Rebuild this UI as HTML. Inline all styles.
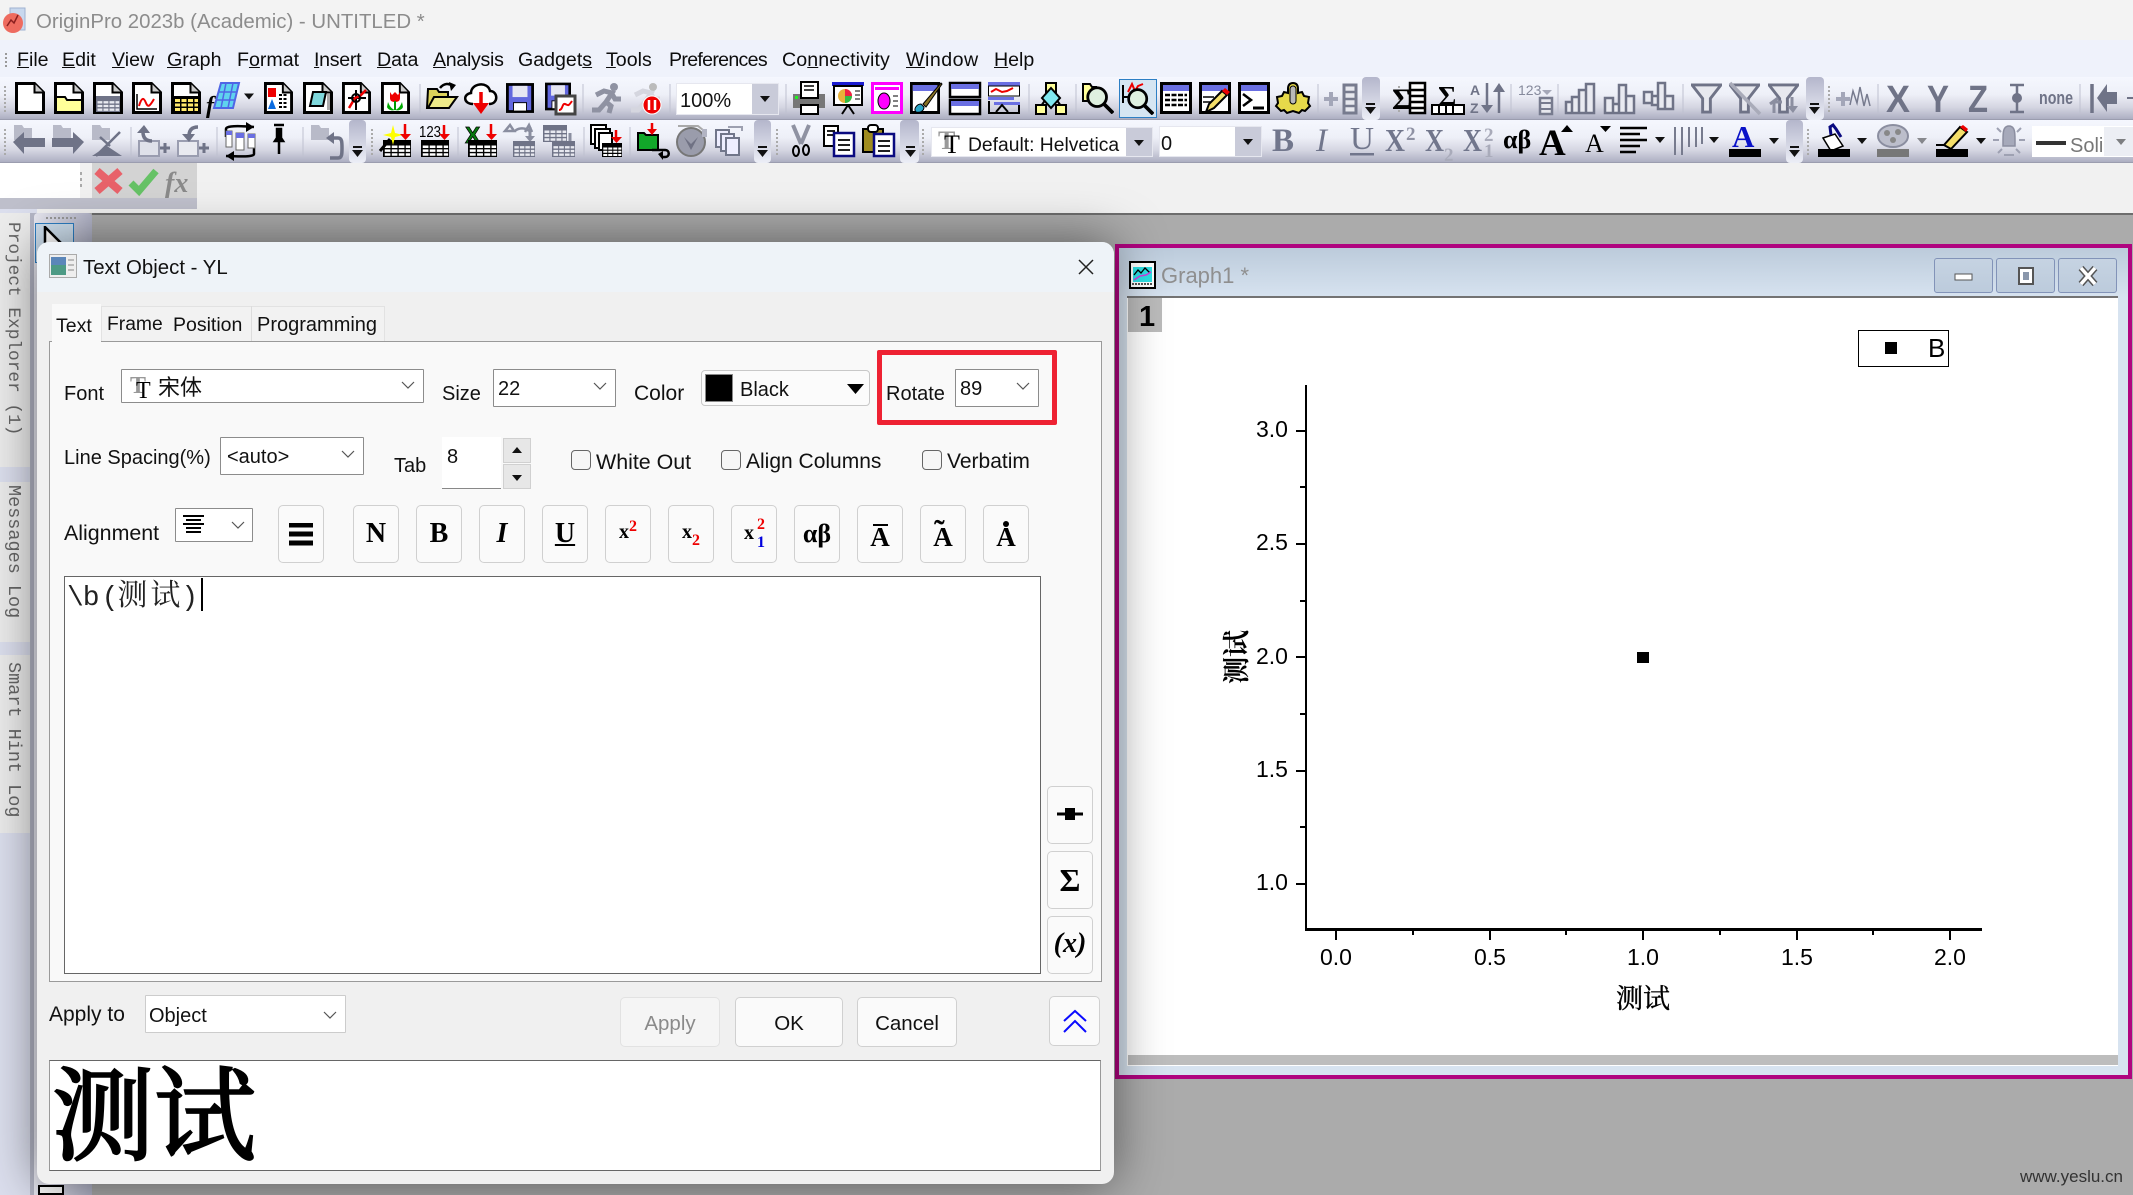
<!DOCTYPE html>
<html lang="zh"><head><meta charset="utf-8"><title>OriginPro</title>
<style>
html,body{margin:0;padding:0}
body{width:2133px;height:1195px;overflow:hidden;position:relative;background:#ababab;font-family:"Liberation Sans","Noto Sans CJK SC",sans-serif}
.a{position:absolute;box-sizing:border-box}
.l{position:absolute;white-space:nowrap;font-size:20px;line-height:24px;color:#111}
.m{top:48px;color:#0c0c0c;font-size:19.6px}
.tb{position:absolute;left:0;width:2133px;height:43px;background:linear-gradient(#f5f7fe 0,#eef0f8 40%,#d5d6e2 70%,#aeb0c3 97%,#8f91a3 100%)}
.c{position:absolute;box-sizing:border-box;background:#fff;border:1px solid #8c8c8c;border-radius:1px}
.b{position:absolute;box-sizing:border-box;background:#fafafa;border:1px solid #d0d0d0;border-radius:5px;text-align:center}
.f{font-family:"Liberation Serif",serif;font-weight:700;color:#000}
.ck{position:absolute;box-sizing:border-box;width:20px;height:20px;background:#f6f6f6;border:1px solid #666;border-radius:4px}
.v{position:absolute;white-space:nowrap;font:18.5px/20px "Liberation Mono",monospace;color:#666;transform-origin:0 0;transform:rotate(90deg)}
.gb{position:absolute;box-sizing:border-box;top:258px;width:59px;height:35px;border:1px solid #8293b8;border-radius:3px;background:linear-gradient(#c6d3e2,#bccbdc)}
.tk{position:absolute;background:#000}
.n{position:absolute;font-size:23px;line-height:26px;color:#000;white-space:nowrap}
</style></head><body>

<!-- workspace -->
<div class="a" style="left:0;top:163px;width:2133px;height:50px;background:#f1f1f1"></div>
<div class="a" style="left:92px;top:213px;width:2041px;height:982px;background:#ababab;border-top:2px solid #6d6d6d"></div>

<!-- left dock -->
<div class="a" style="left:0;top:209px;width:37px;height:986px;background:#dcdfee"></div>
<div class="a" style="left:0;top:213px;width:31px;height:254px;background:#ececec"></div>
<div class="a" style="left:0;top:482px;width:31px;height:160px;background:#ececec"></div>
<div class="a" style="left:0;top:655px;width:31px;height:178px;background:#ececec"></div>
<div class="a" style="left:30px;top:213px;width:7px;height:982px;background:#b4b6c6"></div>
<div class="v" style="left:23px;top:222px;font-size:17.8px">Project Explorer (1)</div>
<div class="v" style="left:23px;top:485px">Messages Log</div>
<div class="v" style="left:23px;top:662px">Smart Hint Log</div>
<!-- object toolbar -->
<div class="a" style="left:34px;top:213px;width:58px;height:982px;background:linear-gradient(90deg,#e9e9f2,#b2b4c8);border-radius:4px 4px 0 0"></div>
<div class="a" style="left:46px;top:217px;width:30px;height:0;border-top:2px dotted #999"></div>
<div class="a" style="left:35px;top:223px;width:39px;height:40px;background:#cfe0ef;border:1px solid #2d7fc4"></div>
<svg class="a" style="left:42px;top:226px" width="24" height="24"><path d="M3 1V20L20 18z" fill="#fff" stroke="#000" stroke-width="2.5"/></svg>
<div class="a" style="left:38px;top:1185px;width:26px;height:10px;background:#fff;border:2px solid #000"></div>

<!-- title bar -->
<div class="a" style="left:0;top:0;width:2133px;height:40px;background:#f3f3f3"></div>
<svg class="a" style="left:2px;top:6px" width="26" height="28"><rect x="8" y="2" width="15" height="22" fill="#c8d8ee" stroke="#9fb2d0"/><circle cx="11" cy="17" r="10" fill="#ee6b5f"/><path d="M5 20l4-6 3 3 4-8" stroke="#8a1f1f" fill="none" stroke-width="1.5"/></svg>
<div class="l" style="left:36px;top:10px;color:#8c8c8c;font-size:20.4px">OriginPro 2023b (Academic) - UNTITLED *</div>

<!-- menu bar -->
<div class="a" style="left:0;top:40px;width:2133px;height:37px;background:#eff2fb"></div>
<div class="a" style="left:5px;top:53px;width:0;height:14px;border-left:2px dotted #999"></div>
<div class="l m" style="left:17px"><u>F</u>ile</div>
<div class="l m" style="left:62px"><u>E</u>dit</div>
<div class="l m" style="left:112px"><u>V</u>iew</div>
<div class="l m" style="left:167px"><u>G</u>raph</div>
<div class="l m" style="left:237px">F<u>o</u>rmat</div>
<div class="l m" style="left:314px;letter-spacing:-.3px"><u>I</u>nsert</div>
<div class="l m" style="left:377px"><u>D</u>ata</div>
<div class="l m" style="left:433px;letter-spacing:-.3px"><u>A</u>nalysis</div>
<div class="l m" style="left:518px">Gadget<u>s</u></div>
<div class="l m" style="left:606px"><u>T</u>ools</div>
<div class="l m" style="left:669px;letter-spacing:-.7px">Preferences</div>
<div class="l m" style="left:782px;letter-spacing:.1px">Co<u>n</u>nectivity</div>
<div class="l m" style="left:906px;letter-spacing:.5px"><u>W</u>indow</div>
<div class="l m" style="left:994px"><u>H</u>elp</div>

<!-- toolbars -->
<div class="tb" style="top:77px"></div>
<div class="tb" style="top:120px"></div>

<!-- toolbar icons -->
<svg class="a" style="left:0;top:0" width="2133" height="213" font-family="Liberation Sans">
<defs>
<linearGradient id="gr" x1="0" y1="0" x2="0" y2="1"><stop offset="0" stop-color="#b4b6cb"/><stop offset="1" stop-color="#eceef6"/></linearGradient>
<symbol id="d" viewBox="0 0 30 32" preserveAspectRatio="none"><path d="M1.5 1.5h18l9 9v20h-27z" fill="#fff" stroke="#000" stroke-width="3"/><path d="M19.5 1.5v9h9" fill="#ccc" stroke="#000" stroke-width="2"/></symbol>
<symbol id="g" viewBox="0 0 32 24" preserveAspectRatio="none"><rect width="32" height="24" fill="#000"/><path d="M2 9.5H31M2 15H31M2 20.5H31" stroke="#fff" stroke-width="3.5" stroke-dasharray="6.5 1.5"/></symbol>
<symbol id="gg" viewBox="0 0 32 24" preserveAspectRatio="none"><rect width="32" height="24" fill="#6f7387"/><path d="M2 9.5H31M2 15H31M2 20.5H31" stroke="#e8e9f0" stroke-width="3.5" stroke-dasharray="6.5 1.5"/></symbol>
<symbol id="w" viewBox="0 0 32 32" preserveAspectRatio="none"><rect x="1.5" y="1.5" width="29" height="29" fill="#fff" stroke="#000" stroke-width="3"/><rect x="3" y="3" width="26" height="6" fill="#6a6fe2"/></symbol>
<symbol id="da" viewBox="0 0 12 8"><path d="M1 1h10L6 7z" fill="#111"/></symbol>
<symbol id="mag" viewBox="0 0 32 32"><path d="M21 21l10 10" stroke="#000" stroke-width="4"/><circle cx="14" cy="14" r="10" fill="#dff0e0" stroke="#000" stroke-width="3"/></symbol>
<symbol id="fun" viewBox="0 0 32 32"><path d="M1 2h30L20 16v14h-8V16z" fill="#e7e8ee" stroke="#6f7387" stroke-width="3"/></symbol>
<symbol id="sv" viewBox="0 0 30 32"><rect x="1.5" y="1.5" width="27" height="29" fill="#6267de" stroke="#000" stroke-width="3"/><rect x="7" y="3" width="16" height="12" fill="#e6e6f2"/><rect x="8" y="21" width="14" height="9" fill="#fff" stroke="#000"/></symbol>
<symbol id="run" viewBox="0 0 32 32"><circle cx="24" cy="5" r="4"/><path d="M6 13l8-4 8 2-6 9 5 4-2 7M16 20L9 28H2M22 12l3 5h6" fill="none" stroke-width="5" stroke="currentColor"/></symbol>
</defs>

<!-- grips -->
<g stroke="#aaa" stroke-width="2" stroke-dasharray="2 2" fill="none">
<path d="M5 86v28M5 129v28M1829 86v28M1808 129v28M372 129v28M777 129v28M923 129v28M1399 86v28"/>
</g>
<!-- gripper ends -->
<g fill="url(#gr)">
<rect x="349" y="120" width="17" height="43" rx="4"/><rect x="754" y="120" width="17" height="43" rx="4"/><rect x="900" y="120" width="19" height="43" rx="4"/><rect x="1786" y="120" width="17" height="43" rx="4"/>
<rect x="1362" y="77" width="18" height="43" rx="4"/><rect x="1806" y="77" width="18" height="43" rx="4"/>
</g>
<g fill="#111">
<g id="ge"><rect x="353" y="146" width="9" height="2"/><path d="M352 150h11l-5.500 7z"/></g>
<use href="#ge" x="405"/><use href="#ge" x="553"/><use href="#ge" x="1437"/>
<use href="#ge" x="1013" y="-43"/><use href="#ge" x="1457" y="-43"/>
</g>
<!-- separators -->
<g stroke="#bfc1d0" stroke-width="1"><path d="M420 84v30M583 84v30M670 84v30M786 84v30M1029 84v30M1076 84v30M1318 84v30M1511 84v30M1558 84v30M1683 84v30M1878 84v30M2080 84v30M131 127v30M217 127v30M303 127v30M458 127v30M584 127v30M630 127v30"/></g>

<!-- ROW 1 -->
<use href="#d" x="15" y="82" width="30" height="32"/>
<use href="#d" x="54" y="82" width="30" height="32"/><path d="M56 112V97h9l2 3h15v12z" fill="#ffff99" stroke="#000" stroke-width="2"/>
<use href="#d" x="93" y="82" width="30" height="32"/><use href="#gg" x="96" y="96" width="24" height="16"/>
<use href="#d" x="132" y="82" width="30" height="32"/><path d="M137 94v15h20" fill="none" stroke="#000" stroke-width="1.500"/><path d="M139 106c3-10 5-8 7-3s4 3 8-4" stroke="#e00" stroke-width="2" fill="none"/>
<use href="#d" x="171" y="82" width="30" height="32"/><rect x="174" y="96" width="24" height="16" fill="#000"/><path d="M175 100.500H198M175 105H198M175 109.500H198" stroke="#ffe86a" stroke-width="3" stroke-dasharray="5 1.500"/>
<path d="M214 108l7-25h18l-6 25z" fill="#5fd3ee" stroke="#4f66e6" stroke-width="2"/><path d="M218 92h18M216 100h18M226 83l-5 25M233 83l-5 25" stroke="#4f66e6" stroke-width="1.500"/><text x="206" y="113" font-family="Liberation Serif" font-style="italic" font-weight="700" font-size="24">f</text>
<use href="#da" x="243" y="92" width="12" height="9"/>
<use href="#d" x="264" y="82" width="29" height="32"/><rect x="268" y="88" width="8" height="9" fill="#e00"/><path d="M272 99l-4 10h8z" fill="#0a6be0"/><path d="M279 95h9M279 99h9M279 103h9M279 107h9" stroke="#000" stroke-width="2" stroke-dasharray="3 1.500"/>
<use href="#d" x="303" y="82" width="30" height="32"/><path d="M310 106l3-14h13l-3 14z" fill="#7fd8dc" stroke="#000" stroke-width="2"/><rect x="327" y="94" width="3" height="16" fill="#aaa"/>
<use href="#d" x="342" y="82" width="29" height="32"/><path d="M348 98h18M356 90v20" stroke="#000" stroke-width="2"/><path d="M349 108l6-10 5-2 6-6" stroke="#e00" stroke-width="2.500" fill="none"/><circle cx="356" cy="98" r="4" fill="none" stroke="#000" stroke-width="2"/>
<use href="#d" x="381" y="82" width="29" height="32"/><path d="M390 92l2 3 3-3 3 3 2-3v6c0 3-2 4-5 4s-5-1-5-4z" fill="#e00"/><path d="M395 101v9" stroke="#090" stroke-width="2"/><path d="M388 102c2 5 4 7 7 8-3 1-7 0-8-3zM402 102c-2 5-4 7-7 8 3 1 7 0 8-3z" fill="#0a0"/>
<path d="M428 89h9l2 3h9v16h-21z" fill="#dcd25a" stroke="#000" stroke-width="2"/><path d="M428 108l6-11h23l-8 11z" fill="#eeea8a" stroke="#000" stroke-width="2"/><path d="M440 88c4-5 9-5 13-2" fill="none" stroke="#000" stroke-width="2.500"/><path d="M449 82l7 3-5 6z"/>
<path d="M473 104c-10 0-10-10-2-11 0-10 17-12 19-2 8 0 9 13-1 13" fill="#fff" stroke="#000" stroke-width="2.500"/><path d="M481 92v14" stroke="#e00" stroke-width="3.500"/><path d="M473 103h16l-8 11z" fill="#e00"/>
<use href="#sv" x="506" y="82" width="28" height="32"/>
<use href="#sv" x="545" y="82" width="26" height="29"/><rect x="556" y="96" width="19" height="18" fill="#fff" stroke="#444" stroke-width="3"/><path d="M559 110c4 0 3-7 6-6s3 3 7-3" stroke="#e00" stroke-width="2" fill="none"/>
<use href="#run" x="590" y="82" width="32" height="32" style="color:#8f92a2;fill:#8f92a2"/>
<use href="#run" x="629" y="82" width="32" height="32" style="color:#d5d6df;fill:#bbb"/><circle cx="652" cy="105" r="9" fill="#e00" stroke="#fff"/><path d="M649 100v10M655 100v10" stroke="#fff" stroke-width="2.500"/>
<!-- zoom combo -->
<rect x="676" y="83" width="103" height="32" fill="#fff"/><rect x="752" y="84" width="26" height="30" fill="#c9cbd9"/><rect x="676.500" y="83.500" width="102" height="31" fill="none" stroke="#e6e7ef"/>
<text x="680" y="107" font-size="20" fill="#111">100%</text><use href="#da" x="759" y="95" width="12" height="8"/>
<!-- printer etc -->
<rect x="793" y="94" width="32" height="14" fill="#777"/><rect x="801" y="82" width="17" height="16" fill="#fff" stroke="#000" stroke-width="2"/><path d="M804 86h10M804 90h10" stroke="#000" stroke-width="1.500"/><rect x="801" y="105" width="17" height="9" fill="#fff" stroke="#000" stroke-width="2"/><rect x="795" y="96" width="3" height="3" fill="#2e2"/>
<rect x="832" y="82" width="32" height="4" fill="#1b1bd0"/><rect x="834" y="86" width="28" height="19" fill="#fff" stroke="#000" stroke-width="2"/><circle cx="845" cy="96" r="7" fill="#e8b23a"/><path d="M845 96v-7a7 7 0 0 1 7 7z" fill="#e24"/><path d="M845 96h7a7 7 0 0 1-7 7z" fill="#3b4"/><path d="M855 91h5M855 95h5M855 99h5" stroke="#000"/><path d="M848 105l-6 9M848 105l6 9" stroke="#000" stroke-width="2"/>
<rect x="872.500" y="83.500" width="29" height="29" fill="#fff" stroke="#f0f" stroke-width="3"/><rect x="875" y="87" width="24" height="3" fill="#f0f"/><ellipse cx="884" cy="101" rx="6" ry="8" fill="#f0f" stroke="#000"/><path d="M893 96h5M893 101h5M893 106h5" stroke="#000"/>
<use href="#w" x="910" y="82" width="30" height="32"/><path d="M916 112c-3-3 1-8 5-8l3 3c0 4-4 6-8 5z" fill="#2aa7c9" stroke="#000"/><path d="M923 104l18-21 1 1-16 23z" fill="#8a7426" stroke="#000"/>
<rect x="950" y="83" width="30" height="14" fill="#fff" stroke="#000" stroke-width="2.500"/><rect x="951" y="84" width="28" height="5" fill="#6a6fe2"/><rect x="950" y="100" width="30" height="14" fill="#fff" stroke="#000" stroke-width="2.500"/><rect x="951" y="101" width="28" height="5" fill="#6a6fe2"/>
<rect x="988" y="82" width="32" height="4" fill="#6a6fe2"/><rect x="988.500" y="86" width="31" height="10" fill="#fff" stroke="#000"/><path d="M991 92l5-3 6 3 5-1 6-3" stroke="#e00" stroke-width="2" fill="none"/><rect x="988" y="97" width="26" height="3" fill="#6a6fe2"/><rect x="994" y="102" width="26" height="3" fill="#6a6fe2"/><path d="M989 101v12h30v-8M996 112l6-7 6 7" fill="none" stroke="#000" stroke-width="2"/>
<path d="M1051 92l-10 14M1051 92l10 14" stroke="#000" stroke-width="2"/><rect x="1046" y="83" width="10" height="9" fill="#ffff99" stroke="#000" stroke-width="2"/><path d="M1051 88l9 10-9 10-9-10z" fill="#80e8f0" stroke="#000" stroke-width="2"/><rect x="1036" y="105" width="10" height="9" fill="#ffff99" stroke="#000" stroke-width="2"/><rect x="1056" y="105" width="10" height="9" fill="#ffff99" stroke="#000" stroke-width="2"/>
<path d="M1083 84h7l2 3h4v14h-13z" fill="#ffff99" stroke="#000" stroke-width="2"/><use href="#mag" x="1084" y="84" width="30" height="30"/>
<rect x="1119.500" y="79.500" width="37" height="38" fill="#d5e5f2" stroke="#2d7fc4"/><path d="M1123 85v18M1123 97h6" stroke="#000" stroke-width="2"/><path d="M1128 92l4-8 3 7 3-5 5-2" stroke="#e00" stroke-width="2" fill="none"/><use href="#mag" x="1125" y="86" width="29" height="29"/>
<use href="#w" x="1160" y="82" width="32" height="32"/><path d="M1165 95h22M1165 100h22M1165 105h22" stroke="#000" stroke-width="2.500" stroke-dasharray="5 1.500"/>
<use href="#w" x="1199" y="82" width="32" height="32"/><path d="M1203 97h11M1203 102h8" stroke="#000" stroke-width="1.500"/><path d="M1206 112l3-8 13-13 5 4-13 13z" fill="#f5df6a" stroke="#000" stroke-width="2"/><path d="M1222 91l3-3 5 4-3 3z" fill="#e00"/>
<use href="#w" x="1238" y="82" width="32" height="32"/><path d="M1243 94l8 6-8 6" fill="none" stroke="#000" stroke-width="2.500"/><path d="M1253 108h11" stroke="#000" stroke-width="3"/>
<path d="M1293 83c4 0 5 3 5 6v4l4-1 2 4 5 1-1 6 2 3-5 5-3-1-3 3-6-2-6 2-3-3-3 1-5-5 2-3-1-6 5-1 2-4 4 1v-4c0-3 1-6 5-6z" fill="#e6d94a" stroke="#000" stroke-width="2"/><rect x="1290" y="86" width="6" height="18" rx="3" fill="#b9b9b9" stroke="#000"/>
<path d="M1324 99h14M1331 92v14" stroke="#a3a6b8" stroke-width="4"/><path d="M1344 85h12v28h-12z" fill="#e7e8ee" stroke="#777b8e" stroke-width="3"/><path d="M1344 92h12M1344 99h12M1344 106h12" stroke="#777b8e" stroke-width="2.500"/>
<!-- sigma col -->
<text x="1392" y="109" font-size="30" font-weight="700" font-family="Liberation Serif">Σ</text><rect x="1410" y="83" width="15" height="30" fill="#fff" stroke="#000" stroke-width="2.500"/><path d="M1410 90h15M1410 96h15M1410 102h15M1410 108h15" stroke="#000" stroke-width="2.500"/>
<text x="1438" y="106" font-size="28" font-weight="700" font-family="Liberation Serif">Σ</text><rect x="1432" y="105" width="32" height="9" fill="#fff" stroke="#000" stroke-width="2"/><path d="M1439 105v9M1446 105v9M1453 105v9" stroke="#000" stroke-width="2"/>
<text x="1470" y="95" font-size="14" fill="#6f7387" font-weight="700">A</text><text x="1470" y="113" font-size="14" fill="#6f7387" font-weight="700">Z</text><path d="M1487 83v27M1499 86v27" stroke="#6f7387" stroke-width="2.500"/><path d="M1481 105h12l-6 8zM1493 92h12l-6-9z" fill="#6f7387"/>
<text x="1518" y="95" font-size="14" fill="#868a9c">123</text><path d="M1542 90l5 5 5-5z" fill="#a5a8b8"/><path d="M1540 98h12v16h-12z" fill="#e7e8ee" stroke="#777b8e" stroke-width="2.500"/><path d="M1540 103h12M1540 109h12" stroke="#777b8e" stroke-width="2"/>
<g fill="#e9eaf1" stroke="#6f7387" stroke-width="2.500"><path d="M1566 102h6v11h-6zM1572 97h7v16h-7zM1579 90h7v23h-7zM1586 84h8v29h-8z"/><path d="M1605 98h8v15h-8zM1613 104h6v9h-6zM1619 85h7v28h-7zM1626 96h8v17h-8z"/><path d="M1644 92h8v11h-8zM1652 96h6v9h-6zM1658 83h7v26h-7zM1665 96h8v13h-8z"/></g>
<use href="#fun" x="1691" y="83" width="31" height="31"/><use href="#fun" x="1729" y="83" width="31" height="31"/><path d="M1730 83l30 31" stroke="#a9abb9" stroke-width="3.500"/><use href="#fun" x="1768" y="83" width="31" height="31"/><path d="M1774 113v-11h8M1778 98l-8 6M1792 97v9" stroke="#8b8ea0" stroke-width="3" fill="none"/><path d="M1787 106h11l-5 7z" fill="#8b8ea0"/>
<path d="M1836 99h14M1843 92v14" stroke="#a3a6b8" stroke-width="4"/><path d="M1850 105l3-14 4 12 3-16 4 19 3-12 3 12" stroke="#777b8e" stroke-width="1.500" fill="none"/>
<g fill="#6f7387" font-weight="700" font-size="38" style="font-stretch:condensed"><text x="1886" y="112" textLength="24" lengthAdjust="spacingAndGlyphs">X</text><text x="1927" y="112" textLength="22" lengthAdjust="spacingAndGlyphs">Y</text><text x="1968" y="112" textLength="20" lengthAdjust="spacingAndGlyphs">Z</text><text x="2039" y="104" font-size="18" textLength="34" lengthAdjust="spacingAndGlyphs">none</text></g>
<path d="M2010 85h14M2010 112h14M2017 85v27" stroke="#6f7387" stroke-width="2.500"/><circle cx="2017" cy="98" r="5" fill="#6f7387"/>
<path d="M2092 84v29" stroke="#6f7387" stroke-width="3.500"/><path d="M2097 98l10-14v8h10v12h-10v8z" fill="#6f7387"/>
<path d="M2127 98h6" stroke="#6f7387" stroke-width="2"/>

<!-- ROW 2 -->
<g id="fld"><path d="M14 128v-3h8l2 3h8v12H14z" fill="#b8bac8"/></g>
<path d="M13 142l11-10v6h21v9H24v7z" fill="#6f7387"/>
<path d="M53 125h8l2 3h8v12H53z" fill="#b8bac8"/><path d="M84 142l-11-10v6H52v9h21v7z" fill="#6f7387"/>
<path d="M92 125h8l2 3h8v12H92z" fill="#b8bac8"/><path d="M92 156l15-10 15 10z" fill="#6f7387"/><path d="M96 156l24-24M100 137l10 9" stroke="#6f7387" stroke-width="2.500"/>
<path d="M139 141h20v15h-20z" fill="#dfe1ea" stroke="#9a9db0" stroke-width="2"/><path d="M152 141c-6 0-9-3-9-9" fill="none" stroke="#6f7387" stroke-width="3.500"/><path d="M137 133l7-8 6 8z" fill="#6f7387"/><path d="M160 148h10M165 143v10" stroke="#6f7387" stroke-width="3"/>
<path d="M178 141h20v15h-20z" fill="#e9eaf0" stroke="#9a9db0" stroke-width="2"/><path d="M198 127c-6 0-9 3-9 9" fill="none" stroke="#6f7387" stroke-width="3.500"/><path d="M182 134l7 8 6-8z" fill="#6f7387"/><path d="M199 148h10M204 143v10" stroke="#6f7387" stroke-width="3"/>
<path d="M226 137v-8c0-2 4-4 28-2M254 146v8c0 2-4 3-28 2" fill="none" stroke="#000" stroke-width="2.500"/><path d="M246 122l8 5-8 5zM234 151l-8 5 8 5z" fill="#000"/><rect x="226" y="131" width="6" height="16" fill="#fff" stroke="#666"/><rect x="226" y="131" width="6" height="4" fill="#6a6fe2"/><rect x="236" y="133" width="8" height="17" fill="#fff" stroke="#666"/><rect x="236" y="133" width="8" height="5" fill="#6a6fe2"/><rect x="248" y="134" width="7" height="14" fill="#fff" stroke="#666"/><rect x="248" y="134" width="7" height="4" fill="#6a6fe2"/>
<path d="M274 125h10M275 141h8l-2-3v-9h-4v9zM279 141v13" stroke="#000" stroke-width="2.500" fill="#000"/>
<path d="M311 125h8l2 3h8v12h-18z" fill="#b8bac8"/><path d="M330 158h8c4 0 4-4 4-10s0-10-4-10h-6" stroke="#6f7387" stroke-width="3.500" fill="none"/><path d="M334 132l-8 6 8 6z" fill="#6f7387"/>
<!-- data import group -->
<use href="#g" x="383" y="140" width="28" height="17"/><path d="M393 125l2 8 8 2-8 2-2 8-2-8-8-2 8-2z" fill="#ff0"/><path d="M380 151l10-12" stroke="#000" stroke-width="3"/><path d="M405 124v11" stroke="#e00" stroke-width="2.500"/><path d="M400 134h11l-5.500 6z" fill="#e00"/>
<text x="419" y="137" font-size="16" textLength="22" lengthAdjust="spacingAndGlyphs">123</text><path d="M444 125v10" stroke="#e00" stroke-width="2.500"/><path d="M439 134h11l-5.500 6z" fill="#e00"/><use href="#g" x="421" y="140" width="28" height="17"/>
<text x="465" y="143" font-size="23" font-weight="700" fill="#087a10" stroke="#000" stroke-width=".7">X</text><path d="M491 124v11" stroke="#e00" stroke-width="2.500"/><path d="M486 134h11l-5.500 6z" fill="#e00"/><use href="#g" x="468" y="140" width="29" height="17"/>
<path d="M515 131a9 7 0 0 1 14 0M505 131l5-6 4 6zM525 132l4-7 3 7" fill="none" stroke="#8a8ea0" stroke-width="2.500"/><path d="M530 127v10" stroke="#8a8ea0" stroke-width="3"/><path d="M525 136h10l-5 6z" fill="#8a8ea0"/><use href="#gg" x="513" y="141" width="22" height="16"/>
<use href="#gg" x="543" y="125" width="24" height="17"/><path d="M570 133v10" stroke="#8a8ea0" stroke-width="3"/><path d="M565 141h10l-5 6z" fill="#8a8ea0"/><use href="#gg" x="552" y="141" width="23" height="16"/>
<rect x="591" y="125" width="15" height="19" fill="#fff" stroke="#000" stroke-width="2"/><rect x="595" y="129" width="15" height="19" fill="#fff" stroke="#000" stroke-width="2"/><rect x="599" y="133" width="13" height="17" fill="#fff" stroke="#000" stroke-width="2"/><path d="M616 130v9" stroke="#e00" stroke-width="2.500"/><path d="M611 137h11l-5.500 6z" fill="#e00"/><use href="#g" x="602" y="143" width="20" height="14"/>
<path d="M638 133h6l2 2h12v15h-20z" fill="#12a72a" stroke="#000" stroke-width="2"/><path d="M652 123v7" stroke="#e00" stroke-width="2.500"/><path d="M647 129h10l-5 6z" fill="#e00"/><path d="M652 150h13c5 0 5 7 0 7h-2" fill="none" stroke="#000" stroke-width="2.500"/><path d="M658 154l5-3v9z" fill="#000"/>
<circle cx="691" cy="142" r="14" fill="#9a9cab" stroke="#777" stroke-width="2"/><path d="M684 137l7 7 7-7-7 13z" fill="#6f7183"/><path d="M678 126h20l5 4" fill="none" stroke="#aaa" stroke-width="2"/><path d="M702 129h5v8h-5z" fill="#b2b4c3"/>
<g fill="#eef" stroke="#71768a" stroke-width="2"><rect x="716" y="130" width="13" height="17"/><rect x="721" y="134" width="13" height="17"/><rect x="726" y="138" width="13" height="17"/></g><path d="M728 127h14v4" stroke="#9da0b0" fill="none" stroke-width="2"/>
<path d="M793 125l8 19M809 125l-8 19" stroke="#8f92a2" stroke-width="4"/><ellipse cx="796" cy="151" rx="3" ry="5" fill="none" stroke="#000" stroke-width="2"/><ellipse cx="806" cy="150" rx="3" ry="5" fill="none" stroke="#000" stroke-width="2"/>
<g fill="#fff" stroke="#000" stroke-width="2"><path d="M824 126h14v5"/><path d="M824 126h14v20h-14z"/></g><rect x="834" y="133" width="20" height="23" fill="#fff" stroke="#0a0a80" stroke-width="2.500"/><path d="M838 140h12M838 145h12M838 150h12M827 131h8M827 135h6" stroke="#000" stroke-width="1.800"/>
<rect x="863" y="129" width="20" height="23" fill="#a08c20" stroke="#000" stroke-width="2"/><rect x="868" y="125" width="10" height="7" rx="3" fill="#fff" stroke="#000" stroke-width="2"/><rect x="874" y="134" width="20" height="22" fill="#fff" stroke="#0a0a80" stroke-width="2.500"/><path d="M878 141h12M878 146h12M878 151h12" stroke="#000" stroke-width="1.800"/>
<!-- font combo -->
<rect x="931" y="127" width="222" height="30" fill="#fff"/><rect x="1126" y="128" width="26" height="28" fill="#c9cbd9"/><rect x="931.500" y="127.500" width="221" height="29" fill="none" stroke="#e6e7ef"/>
<text x="938" y="149" font-size="26" font-family="Liberation Serif" font-weight="700" fill="#999">T</text><text x="944" y="153" font-size="26" font-family="Liberation Serif">T</text>
<text x="968" y="151" font-size="19.300" fill="#111">Default: Helvetica</text><use href="#da" x="1133" y="139" width="12" height="8"/>
<rect x="1159" y="126" width="103" height="31" fill="#fff"/><rect x="1235" y="127" width="26" height="29" fill="#c9cbd9"/><rect x="1159.500" y="126.500" width="102" height="30" fill="none" stroke="#e6e7ef"/>
<text x="1161" y="150" font-size="20" fill="#111">0</text><use href="#da" x="1242" y="138" width="12" height="8"/>
<g font-family="Liberation Serif" font-weight="700" fill="#71768c">
<text x="1272" y="151" font-size="33">B</text><text x="1316" y="151" font-size="33" font-style="italic" font-weight="400">I</text><text x="1350" y="149" font-size="32" font-weight="400" textLength="24" lengthAdjust="spacingAndGlyphs">U</text><rect x="1350" y="153" width="24" height="2.500"/>
<text x="1385" y="151" font-size="32" textLength="20" lengthAdjust="spacingAndGlyphs">X</text><text x="1406" y="140" font-size="19" fill="#8f92a4">2</text>
<text x="1425" y="151" font-size="32" textLength="19" lengthAdjust="spacingAndGlyphs">X</text><text x="1444" y="161" font-size="19" fill="#a9abba">2</text>
<text x="1463" y="151" font-size="32" textLength="19" lengthAdjust="spacingAndGlyphs">X</text><text x="1484" y="141" font-size="19" fill="#a9abba">2</text><text x="1484" y="157" font-size="19" fill="#a9abba">1</text>
</g>
<text x="1503" y="148" font-size="26" font-weight="700" font-family="Liberation Serif">αβ</text>
<text x="1539" y="155" font-size="37" font-family="Liberation Serif" font-weight="700">A</text><path d="M1561 132l6-7 6 7z"/>
<text x="1585" y="152" font-size="26" font-family="Liberation Serif">A</text><path d="M1600 126h11l-5.500 6z"/>
<path d="M1620 128h27M1620 134h20M1620 140h27M1620 146h20M1620 152h16" stroke="#000" stroke-width="2.500"/><use href="#da" x="1654" y="136" width="12" height="8"/>
<path d="M1675 127v28M1682 127v28M1689 127v20M1696 127v20M1702 127v17" stroke="#777b8e" stroke-width="2"/><use href="#da" x="1708" y="136" width="12" height="8"/>
<text x="1732" y="147" font-size="31" font-family="Liberation Serif" font-weight="700" fill="#0a12c8">A</text><rect x="1729" y="149" width="32" height="8" fill="#000"/><use href="#da" x="1768" y="137" width="12" height="8"/>
<path d="M1823 138l12-4 8 12-12 5z" fill="#fff" stroke="#000" stroke-width="1.500"/><path d="M1831 135l-1-8 3-2 3 4 5 8" fill="none" stroke="#0a0a80" stroke-width="3"/><rect x="1818" y="149" width="32" height="8" fill="#000"/><use href="#da" x="1856" y="137" width="12" height="8"/>
<ellipse cx="1893" cy="136" rx="15" ry="11" fill="#bcbecb" stroke="#8b8ea0" stroke-width="2"/><circle cx="1887" cy="133" r="3" fill="#888"/><circle cx="1898" cy="132" r="3" fill="#888"/><circle cx="1893" cy="140" r="3" fill="#888"/><rect x="1877" y="149" width="32" height="8" fill="#777"/><use href="#da" x="1916" y="137" width="12" height="8" opacity=".45"/>
<path d="M1944 145l16-18 7 5-16 17z" fill="#f5df6a" stroke="#000" stroke-width="2"/><path d="M1960 127l3-2 5 4-2 3z" fill="#e00"/><path d="M1936 145h8" stroke="#000" stroke-width="2"/><rect x="1936" y="149" width="32" height="8" fill="#000"/><use href="#da" x="1975" y="137" width="12" height="8"/>
<path d="M2003 140c0-7 0-14 6-14s6 7 6 14v6h-12z" fill="#a6a9ba" stroke="#8b8ea0" stroke-width="1.500"/><path d="M1993 140h6M2019 140h6M1997 128l4 4M2021 128l-4 4M1998 153l4-4M2020 153l-4-4M2004 155h10" stroke="#9ea1b2" stroke-width="2"/>
<rect x="2032" y="126" width="101" height="31" fill="#fff"/><rect x="2104" y="127" width="29" height="29" fill="#eceef4"/><rect x="2036" y="141" width="30" height="4" fill="#333"/><text x="2070" y="152" font-size="20" fill="#777">Soli</text><use href="#da" x="2115" y="138" width="12" height="8" opacity=".5"/>

<!-- ROW 3 -->
<rect x="0" y="163" width="80" height="35" fill="#fff"/>
<path d="M81 172v16" stroke="#aaa" stroke-width="2" stroke-dasharray="3 3"/>
<rect x="92" y="163" width="105" height="35" fill="#d3d3d3"/>
<rect x="0" y="198" width="197" height="11" fill="#bfc0cc"/>
<path d="M97 171l23 20M120 171l-23 20" stroke="#e8626a" stroke-width="8"/>
<path d="M131 183l8 8 17-20" fill="none" stroke="#66c266" stroke-width="7"/>
<text x="165" y="192" font-size="28" font-family="Liberation Serif" font-style="italic" font-weight="700" fill="#8a8a8a">fx</text>
</svg>

<!-- GRAPH WINDOW -->
<div class="a" style="left:1115px;top:244px;width:1017px;height:835px;background:linear-gradient(#bccbdb 0,#d7e3f0 6%,#d7e3f0 100%);border:4px solid #b0047f"></div>
<div class="a" style="left:1127px;top:296px;width:991px;height:770px;background:#fff;border-top:2px solid #737373"></div>
<div class="a" style="left:1128px;top:1055px;width:990px;height:10px;background:#bdbdbd"></div>
<svg class="a" style="left:1129px;top:261px" width="27" height="28"><rect x="1" y="1" width="25" height="26" fill="#fff" stroke="#000" stroke-width="2"/><rect x="4" y="6" width="19" height="15" fill="#2ce0e4"/><path d="M5 14l4-5 3 3 4-5 5 5" stroke="#000" fill="none" stroke-width="1.300"/><path d="M5 19l6-4 6-1 5-3" stroke="#d33ee0" fill="none" stroke-width="1.500"/><path d="M3 23h21" stroke="#555" stroke-width="2" stroke-dasharray="2 1"/></svg>
<div class="l" style="left:1161px;top:264px;font-size:22px;color:#8f8f8f">Graph1 *</div>
<div class="gb" style="left:1934px"><svg width="57" height="33"><rect x="20" y="15" width="17" height="6" fill="#fff" stroke="#555"/></svg></div>
<div class="gb" style="left:1996px"><svg width="57" height="33"><rect x="22" y="9" width="14" height="16" fill="#fff" stroke="#555" stroke-width="2"/><rect x="26" y="13" width="6" height="8" fill="#8a97ab"/></svg></div>
<div class="gb" style="left:2058px"><svg width="57" height="33"><path d="M22 9l14 16M36 9L22 25" stroke="#555" stroke-width="6.500"/><path d="M22 9l14 16M36 9L22 25" stroke="#fff" stroke-width="3.500"/></svg></div>

<div class="a" style="left:1128px;top:298px;width:34px;height:34px;background:#bbb"></div>
<div class="l" style="left:1139px;top:302px;font-size:29px;line-height:30px;color:#000;font-weight:700">1</div>
<div class="a" style="left:1858px;top:330px;width:91px;height:37px;background:#fff;border:1.500px solid #000"></div>
<div class="a" style="left:1885px;top:342px;width:12px;height:11.500px;background:#000"></div>
<div class="l" style="left:1928px;top:335px;font-size:26px;line-height:26px;color:#000">B</div>

<!-- axes -->
<div class="tk" style="left:1305px;top:385px;width:2px;height:546px"></div>
<div class="tk" style="left:1305px;top:928px;width:677px;height:3px"></div>
<div class="tk" style="left:1296px;top:430px;width:10px;height:2px"></div>
<div class="tk" style="left:1296px;top:543px;width:10px;height:2px"></div>
<div class="tk" style="left:1296px;top:656px;width:10px;height:2px"></div>
<div class="tk" style="left:1296px;top:770px;width:10px;height:2px"></div>
<div class="tk" style="left:1296px;top:883px;width:10px;height:2px"></div>
<div class="tk" style="left:1300px;top:486px;width:6px;height:2px"></div>
<div class="tk" style="left:1300px;top:600px;width:6px;height:2px"></div>
<div class="tk" style="left:1300px;top:713px;width:6px;height:2px"></div>
<div class="tk" style="left:1300px;top:826px;width:6px;height:2px"></div>
<div class="tk" style="left:1335px;top:930px;width:2px;height:10px"></div>
<div class="tk" style="left:1489px;top:930px;width:2px;height:10px"></div>
<div class="tk" style="left:1642px;top:930px;width:2px;height:10px"></div>
<div class="tk" style="left:1796px;top:930px;width:2px;height:10px"></div>
<div class="tk" style="left:1949px;top:930px;width:2px;height:10px"></div>
<div class="tk" style="left:1412px;top:930px;width:2px;height:5px"></div>
<div class="tk" style="left:1565px;top:930px;width:2px;height:5px"></div>
<div class="tk" style="left:1719px;top:930px;width:2px;height:5px"></div>
<div class="tk" style="left:1872px;top:930px;width:2px;height:5px"></div>
<div class="n" style="left:1256px;top:416px">3.0</div>
<div class="n" style="left:1256px;top:529px">2.5</div>
<div class="n" style="left:1256px;top:642.500px">2.0</div>
<div class="n" style="left:1256px;top:756px">1.5</div>
<div class="n" style="left:1256px;top:869px">1.0</div>
<div class="n" style="left:1320px;top:944px">0.0</div>
<div class="n" style="left:1474px;top:944px">0.5</div>
<div class="n" style="left:1627px;top:944px">1.0</div>
<div class="n" style="left:1781px;top:944px">1.5</div>
<div class="n" style="left:1934px;top:944px">2.0</div>
<div class="a" style="left:1637px;top:652px;width:12px;height:11px;background:#000"></div>
<div class="l" style="left:1616px;top:985px;font:400 27px/28px 'Liberation Serif','Noto Serif CJK SC',serif;color:#000;-webkit-text-stroke:.4px #000">测试</div>
<div class="l" style="left:1210px;top:643px;font:700 27px/28px 'Liberation Serif','Noto Serif CJK SC',serif;color:#000;transform:rotate(-90deg)">测试</div>

<div class="l" style="left:2020px;top:1165px;font-size:17px;color:#333">www.yeslu.cn</div>

<!-- DIALOG -->
<div class="a" style="left:37px;top:242px;width:1077px;height:942px;background:#f0f0f0;border-radius:12px;box-shadow:0 0 50px rgba(0,0,0,.5)"></div>
<div class="a" style="left:37px;top:242px;width:1077px;height:50px;background:#eef3f8;border-radius:12px 12px 0 0"></div>
<svg class="a" style="left:49px;top:254px" width="28" height="24"><rect x=".5" y=".5" width="27" height="23" fill="#eee" stroke="#aaa"/><rect x="2" y="3" width="15" height="18" fill="#4d9a85"/><rect x="2" y="3" width="15" height="8" fill="#5b86b9"/><path d="M19 6h6M19 11h6M19 16h6" stroke="#bbb" stroke-width="2"/></svg>
<div class="l" style="left:83px;top:256px;font-size:20.400px">Text Object - YL</div>
<svg class="a" style="left:1078px;top:259px" width="16" height="16"><path d="M1 1l14 14M15 1L1 15" stroke="#222" stroke-width="1.500"/></svg>

<!-- tabs -->
<div class="a" style="left:101px;top:306px;width:284px;height:36px;background:#f2f2f2;border:1px solid #e2e2e2;border-bottom:0"></div>
<div class="a" style="left:251px;top:306px;width:1px;height:36px;background:#dcdcdc"></div>
<div class="a" style="left:49px;top:341px;width:1053px;height:641px;background:#f9f9f9;border:1px solid #9a9a9a"></div>
<div class="a" style="left:52px;top:304px;width:49px;height:39px;background:#f9f9f9"></div>
<div class="l" style="left:56px;top:314px;font-size:19.500px">Text</div>
<div class="l" style="left:107px;top:313px;font-size:19.300px">Frame</div>
<div class="l" style="left:173px;top:313px;font-size:19.500px">Position</div>
<div class="l" style="left:257px;top:313px">Programming</div>

<!-- row 1 -->
<div class="l" style="left:64px;top:382px">Font</div>
<div class="c" style="left:121px;top:369px;width:303px;height:34px"></div>
<svg class="a" style="left:130px;top:374px" width="26" height="26"><text x="0" y="19" font-family="Liberation Serif" font-weight="700" font-size="24" fill="#999">T</text><text x="6" y="24" font-family="Liberation Serif" font-size="24">T</text></svg>
<div class="l" style="left:158px;top:374px;font-size:22px;font-family:'Noto Sans CJK SC',sans-serif">宋体</div>
<svg class="a" style="left:401px;top:381px" width="14" height="9"><path d="M1 1l6 6 6-6" fill="none" stroke="#555" stroke-width="1.200"/></svg>
<div class="l" style="left:442px;top:382px">Size</div>
<div class="c" style="left:493px;top:369px;width:123px;height:38px"></div>
<div class="l" style="left:498px;top:377px">22</div>
<svg class="a" style="left:593px;top:382px" width="14" height="9"><path d="M1 1l6 6 6-6" fill="none" stroke="#555" stroke-width="1.200"/></svg>
<div class="l" style="left:634px;top:382px;font-size:21px">Color</div>
<div class="a" style="left:701px;top:370px;width:169px;height:36px;background:#fbfbfb;border:1px solid #c8c8c8;border-radius:4px"></div>
<div class="a" style="left:705px;top:374px;width:28px;height:28px;background:#000;border:1px solid #888"></div>
<div class="l" style="left:740px;top:378px">Black</div>
<svg class="a" style="left:847px;top:384px" width="18" height="11"><path d="M0 0h17L8.500 10z" fill="#000"/></svg>
<div class="a" style="left:877px;top:350px;width:180px;height:75px;border:5px solid #ee2233;border-radius:2px"></div>
<div class="l" style="left:886px;top:382px">Rotate</div>
<div class="c" style="left:955px;top:369px;width:84px;height:38px"></div>
<div class="l" style="left:960px;top:377px">89</div>
<svg class="a" style="left:1016px;top:382px" width="14" height="9"><path d="M1 1l6 6 6-6" fill="none" stroke="#555" stroke-width="1.200"/></svg>

<!-- row 2 -->
<div class="l" style="left:64px;top:446px">Line Spacing(%)</div>
<div class="c" style="left:220px;top:437px;width:144px;height:38px"></div>
<div class="l" style="left:227px;top:445px">&lt;auto&gt;</div>
<svg class="a" style="left:341px;top:450px" width="14" height="9"><path d="M1 1l6 6 6-6" fill="none" stroke="#555" stroke-width="1.200"/></svg>
<div class="l" style="left:394px;top:454px">Tab</div>
<div class="a" style="left:442px;top:437px;width:59px;height:52px;background:#fff;border-bottom:1px solid #888"></div>
<div class="l" style="left:447px;top:445px">8</div>
<div class="a" style="left:503px;top:438px;width:28px;height:25px;background:#e7e7e7;border:1px solid #d0d0d0"></div>
<div class="a" style="left:503px;top:464px;width:28px;height:25px;background:#e7e7e7;border:1px solid #d0d0d0"></div>
<svg class="a" style="left:511px;top:446px" width="12" height="36"><path d="M1 7L6 1l5 6z" fill="#111"/><path d="M1 29l5 6 5-6z" fill="#111"/></svg>
<div class="ck" style="left:571px;top:450px"></div>
<div class="l" style="left:596px;top:450px;font-size:21.400px">White Out</div>
<div class="ck" style="left:721px;top:450px"></div>
<div class="l" style="left:746px;top:450px;font-size:21px">Align Columns</div>
<div class="ck" style="left:922px;top:450px"></div>
<div class="l" style="left:947px;top:450px;font-size:21px">Verbatim</div>

<!-- row 3 -->
<div class="l" style="left:64px;top:521px;font-size:21.400px">Alignment</div>
<div class="c" style="left:175px;top:508px;width:78px;height:34px"></div>
<svg class="a" style="left:182px;top:514px" width="24" height="20"><path d="M1 2h21M4 6h15M1 10h21M4 14h15M4 18h15" stroke="#000" stroke-width="2"/></svg>
<svg class="a" style="left:231px;top:521px" width="14" height="9"><path d="M1 1l6 6 6-6" fill="none" stroke="#555" stroke-width="1.200"/></svg>
<div class="b" style="left:278px;top:505px;width:46px;height:58px"><svg style="margin-top:17px" width="26" height="24"><path d="M1 2h24M1 11h24M1 20h24" stroke="#000" stroke-width="5"/></svg></div>
<div class="b f" style="left:353px;top:505px;width:46px;height:58px;font-size:28px;line-height:56px">N</div>
<div class="b f" style="left:416px;top:505px;width:46px;height:58px;font-size:28px;line-height:56px">B</div>
<div class="b f" style="left:479px;top:505px;width:46px;height:58px;font-size:28px;line-height:56px;font-style:italic">I</div>
<div class="b f" style="left:542px;top:505px;width:46px;height:58px;font-size:28px;line-height:56px;text-decoration:underline">U</div>
<div class="b f" style="left:605px;top:505px;width:46px;height:58px;font-size:20px;line-height:52px">x<sup style="color:#e00;font-size:16px;line-height:0;vertical-align:7px">2</sup></div>
<div class="b f" style="left:668px;top:505px;width:46px;height:58px;font-size:20px;line-height:52px">x<sub style="color:#e00;font-size:16px;line-height:0;vertical-align:-7px">2</sub></div>
<div class="b f" style="left:731px;top:505px;width:46px;height:58px"><span class="l f" style="left:12px;top:15px;font-size:20px">x</span><span class="l f" style="left:25px;top:7px;font-size:16px;color:#e00">2</span><span class="l f" style="left:25px;top:25px;font-size:16px;color:#00d">1</span></div>
<div class="b f" style="left:794px;top:505px;width:46px;height:58px;font-size:26px;line-height:56px">αβ</div>
<div class="b f" style="left:857px;top:505px;width:46px;height:58px;font-size:27px;line-height:62px"><span class="a" style="left:15px;top:18px;width:15px;height:2px;background:#000"></span>A</div>
<div class="b f" style="left:920px;top:505px;width:46px;height:58px;font-size:27px;line-height:62px"><span class="l f" style="left:13px;top:13px;font-size:32px">˜</span>A</div>
<div class="b f" style="left:983px;top:505px;width:46px;height:58px;font-size:27px;line-height:62px"><span class="a" style="left:19px;top:15px;width:6px;height:6px;background:#000;border-radius:50%"></span>A</div>

<!-- editor -->
<div class="a" style="left:64px;top:576px;width:977px;height:398px;background:#fff;border:1px solid #666;border-width:1px 1px 1px 1.500px"></div>
<div class="l" style="left:67px;top:575px;font:28px/34px 'Liberation Mono','Noto Serif CJK SC',serif;letter-spacing:-1px;color:#222">\b<span style="margin-left:3px">(</span><span style="font-family:'Noto Serif CJK SC',serif;font-size:30px;letter-spacing:3px">测试</span><span style="margin-left:-2px">)</span></div>
<div class="a" style="left:201px;top:578px;width:2px;height:33px;background:#000"></div>

<div class="b" style="left:1047px;top:786px;width:46px;height:58px"><svg style="margin-top:15px" width="30" height="24"><path d="M2 12h26" stroke="#000" stroke-width="3"/><rect x="10" y="6" width="10" height="12" fill="#000"/></svg></div>
<div class="b f" style="left:1047px;top:851px;width:46px;height:58px;font-size:32px;line-height:56px">Σ</div>
<div class="b f" style="left:1047px;top:916px;width:46px;height:58px;font-size:28px;line-height:54px;font-style:italic">(x)</div>

<!-- bottom -->
<div class="l" style="left:49px;top:1003px;font-size:21px">Apply to</div>
<div class="c" style="left:145px;top:995px;width:201px;height:38px;border:1px solid #ccc"></div>
<div class="l" style="left:149px;top:1004px">Object</div>
<svg class="a" style="left:323px;top:1011px" width="14" height="9"><path d="M1 1l6 6 6-6" fill="none" stroke="#555" stroke-width="1.200"/></svg>
<div class="b" style="left:620px;top:997px;width:100px;height:50px;font-size:20.500px;line-height:51px;color:#8a8a8a;background:#f5f5f5;border-color:#e2e2e2">Apply</div>
<div class="b" style="left:735px;top:997px;width:108px;height:50px;font-size:20.500px;line-height:51px;color:#111">OK</div>
<div class="b" style="left:857px;top:997px;width:100px;height:50px;font-size:20.500px;line-height:51px;color:#111">Cancel</div>
<div class="b" style="left:1049px;top:996px;width:51px;height:50px"><svg style="margin-top:12px" width="26" height="24"><path d="M2 12L13 2l11 10M2 23L13 12l11 11" fill="none" stroke="#0a0aff" stroke-width="2"/></svg></div>

<div class="a" style="left:49px;top:1060px;width:1052px;height:111px;background:#fff;border:1px solid #999;border-top:1px solid #666;border-bottom:1px solid #666"></div>
<div class="l" style="left:52px;top:1063px;font:400 102px/112px 'Liberation Serif','Noto Serif CJK SC',serif;color:#000;-webkit-text-stroke:2.5px #000">测试</div>

</body></html>
